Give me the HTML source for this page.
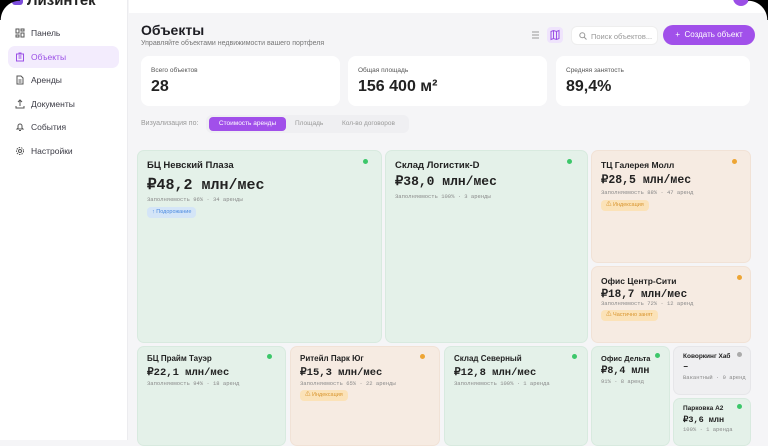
<!DOCTYPE html>
<html><head><meta charset="utf-8"><style>
*{box-sizing:border-box;margin:0;padding:0}
body{width:768px;height:440px;overflow:hidden;background:#f5f5f7;font-family:"Liberation Sans","Noto Sans CJK SC",sans-serif;position:relative;color:#1c1c22}
.side{position:absolute;left:0;top:0;width:128px;height:440px;background:#fff;border-right:1px solid #ececef}
.logo{position:absolute;left:27px;top:-8px;font-weight:bold;font-size:15px;color:#222}
.logoic{position:absolute;left:12px;top:-6px;width:11px;height:11px;border-radius:3px;background:#7c4ddb}
.nav{position:absolute;left:8px;width:111px;height:22px;border-radius:7px;font-size:8.5px;color:#3a3a44;padding-left:23px;line-height:22px}
.nav.act{background:#f3ecfd;color:#9b4fe6}
.nav svg{position:absolute;left:7px;top:6px}
.top{position:absolute;left:129px;top:0;right:0;height:13px;background:#fff}
.crn1{position:absolute;left:0;top:0;width:20px;height:20px;background:radial-gradient(circle at 20px 20px,transparent 19px,#000 19.5px)}
.crn2{position:absolute;right:0;top:0;width:20px;height:20px;background:radial-gradient(circle at 0 20px,transparent 19px,#000 19.5px)}
.avatar{position:absolute;left:733px;top:-10px;width:16px;height:16px;border-radius:50%;background:#9b4fe6}
h1{position:absolute;left:141px;top:22px;font-size:14px;font-weight:bold}
.sub{position:absolute;left:141px;top:40px;font-size:7px;color:#777}
.ib{position:absolute;top:27px;width:16px;height:16px;border-radius:4px}
.search{position:absolute;left:571px;top:26px;width:87px;height:19px;background:#fff;border-radius:6px;border:1px solid #eee;font-size:7.5px;color:#999;padding:5px 0 0 19px}
.btn{position:absolute;left:663px;top:25px;width:92px;height:20px;border-radius:10px;background:#a150ea;color:#fff;font-size:8px;text-align:center;line-height:20px}
.stat{position:absolute;top:56px;height:50px;background:#fff;border-radius:8px}
.stat .l{position:absolute;left:10px;top:11px;font-size:6.5px;color:#555}
.stat .v{position:absolute;left:10px;top:22px;font-size:16px;font-weight:bold;color:#222}
.vis{position:absolute;left:141px;top:120px;font-size:7px;color:#999}
.seg{position:absolute;left:206px;top:115px;width:203px;height:18px;background:#efeff2;border-radius:6px}
.seg span{position:absolute;top:0;line-height:18px;font-size:6.5px;color:#999}
.segact{position:absolute;left:209px;top:117px;width:77px;height:14px;border-radius:4px;background:#a150ea;color:#fff;font-size:6.5px;text-align:center;line-height:14px}
.c{position:absolute;border-radius:7px;border:1px solid #d8eadf;background:#e4f1e9;overflow:hidden}
.c.o{background:#f6ebe2;border-color:#f1e2d6}
.c.g{background:#efeff1;border-color:#e6e6e9}
.c .n{position:absolute;left:9px;top:9px;font-size:8.5px;font-weight:bold;color:#222;white-space:nowrap}
.c .p{position:absolute;left:9px;font-family:"Liberation Mono",monospace;font-weight:bold;color:#222;white-space:nowrap}
.c .m{position:absolute;left:9px;font-family:"Liberation Mono",monospace;font-size:5.5px;color:#888;white-space:nowrap}
.c .d{position:absolute;width:5px;height:5px;border-radius:50%;background:#3cc76a}
.c.o .d{background:#eda534}
.c.g .d{background:#aaa}
.tag{position:absolute;left:9px;height:11px;border-radius:4px;font-size:5.5px;line-height:11px;padding:0 5px;white-space:nowrap}
.tb{background:#d4e5f7;color:#4a8ae0}
.ty{background:#fbe2b8;color:#d8952e}
</style></head><body>
<div class="side">
<div class="logoic"></div><div class="logo">Лизинтек</div>
<div class="nav" style="top:22px"><svg width="10" height="10" viewBox="0 0 10 10" fill="none" stroke="#555" stroke-width="1"><rect x="1" y="1" width="3" height="4"/><rect x="6" y="1" width="3" height="2"/><rect x="6" y="5" width="3" height="4"/><rect x="1" y="7" width="3" height="2"/></svg>Панель</div>
<div class="nav act" style="top:46px"><svg width="10" height="10" viewBox="0 0 10 10" fill="none" stroke="#9b4fe6" stroke-width="1"><rect x="1.5" y="2" width="7" height="7"/><path d="M3.5 4h3M3.5 6h3M4 2V1h2v1"/></svg>Объекты</div>
<div class="nav" style="top:69px"><svg width="10" height="10" viewBox="0 0 10 10" fill="none" stroke="#555" stroke-width="1"><path d="M2 1h4l2 2v6H2z M3.5 5h3M3.5 7h3"/></svg>Аренды</div>
<div class="nav" style="top:93px"><svg width="10" height="10" viewBox="0 0 10 10" fill="none" stroke="#555" stroke-width="1"><path d="M5 7V1M3 3l2-2 2 2M1 7v2h8V7"/></svg>Документы</div>
<div class="nav" style="top:116px"><svg width="10" height="10" viewBox="0 0 10 10" fill="none" stroke="#555" stroke-width="1"><path d="M2 7h6L7 6V4a2 2 0 0 0-4 0v2zM4 8.5h2"/></svg>События</div>
<div class="nav" style="top:140px"><svg width="10" height="10" viewBox="0 0 10 10" fill="none" stroke="#555" stroke-width="1"><circle cx="5" cy="5" r="1.5"/><circle cx="5" cy="5" r="3.5" stroke-dasharray="1.5 1"/></svg>Настройки</div>
</div>
<div class="top"></div>
<div class="avatar"></div>
<div class="crn1"></div><div class="crn2"></div>
<h1>Объекты</h1>
<div class="sub">Управляйте объектами недвижимости вашего портфеля</div>
<div class="ib" style="left:527px"><svg width="16" height="16" viewBox="0 0 16 16" stroke="#999" stroke-width="1"><path d="M5 5h7M5 8h7M5 11h7"/></svg></div>
<div class="ib" style="left:547px;background:#efe4fc"><svg width="16" height="16" viewBox="0 0 16 16" fill="none" stroke="#9b4fe6" stroke-width="1"><path d="M4 4.5l2.5-1 3 1 2.5-1v8l-2.5 1-3-1-2.5 1z M6.5 3.5v8M9.5 4.5v8"/></svg></div>
<div class="search"><svg style="position:absolute;left:7px;top:5px" width="8" height="8" viewBox="0 0 8 8" fill="none" stroke="#999"><circle cx="3.3" cy="3.3" r="2.5"/><path d="M5 5l2.5 2.5"/></svg>Поиск объектов...</div>
<div class="btn">+&nbsp; Создать объект</div>
<div class="stat" style="left:141px;width:199px"><div class="l">Всего объектов</div><div class="v">28</div></div>
<div class="stat" style="left:348px;width:199px"><div class="l">Общая площадь</div><div class="v">156 400 м²</div></div>
<div class="stat" style="left:556px;width:194px"><div class="l">Средняя занятость</div><div class="v">89,4%</div></div>
<div class="vis">Визуализация по:</div>
<div class="seg"><span style="left:89px">Площадь</span><span style="left:136px">Кол-во договоров</span></div>
<div class="segact">Стоимость аренды</div>

<div class="c" style="left:137px;top:150px;width:245px;height:193px"><div class="n" style="font-size:9.5px">БЦ Невский Плаза</div><div class="d" style="left:225px;top:8px"></div><div class="p" style="top:24px;font-size:15px">₽48,2 млн/мес</div><div class="m" style="top:45px">Заполняемость 96% · 34 аренды</div><div class="tag tb" style="top:56px">↑ Подорожание</div></div>
<div class="c" style="left:385px;top:150px;width:203px;height:193px"><div class="n" style="font-size:9.5px">Склад Логистик-D</div><div class="d" style="left:181px;top:8px"></div><div class="p" style="top:23px;font-size:13px">₽38,0 млн/мес</div><div class="m" style="top:42px">Заполняемость 100% · 3 аренды</div></div>
<div class="c o" style="left:591px;top:150px;width:160px;height:113px"><div class="n">ТЦ Галерея Молл</div><div class="d" style="left:140px;top:8px"></div><div class="p" style="top:21px;font-size:11.5px">₽28,5 млн/мес</div><div class="m" style="top:38px">Заполняемость 88% · 47 аренд</div><div class="tag ty" style="top:49px">⚠ Индексация</div></div>
<div class="c o" style="left:591px;top:266px;width:160px;height:77px"><div class="n">Офис Центр-Сити</div><div class="d" style="left:145px;top:8px"></div><div class="p" style="top:20px;font-size:11px">₽18,7 млн/мес</div><div class="m" style="top:33px">Заполняемость 72% · 12 аренд</div><div class="tag ty" style="top:43px">⚠ Частично занят</div></div>
<div class="c" style="left:137px;top:346px;width:149px;height:100px"><div class="n" style="top:7px;font-size:8px">БЦ Прайм Тауэр</div><div class="d" style="left:129px;top:7px"></div><div class="p" style="top:19px;font-size:10.5px">₽22,1 млн/мес</div><div class="m" style="top:33px">Заполняемость 94% · 18 аренд</div></div>
<div class="c o" style="left:290px;top:346px;width:150px;height:100px"><div class="n" style="top:7px;font-size:8px">Ритейл Парк Юг</div><div class="d" style="left:129px;top:7px"></div><div class="p" style="top:19px;font-size:10.5px">₽15,3 млн/мес</div><div class="m" style="top:33px">Заполняемость 65% · 22 аренды</div><div class="tag ty" style="top:43px">⚠ Индексация</div></div>
<div class="c" style="left:444px;top:346px;width:144px;height:100px"><div class="n" style="top:7px;font-size:8px">Склад Северный</div><div class="d" style="left:127px;top:7px"></div><div class="p" style="top:19px;font-size:10.5px">₽12,8 млн/мес</div><div class="m" style="top:33px">Заполняемость 100% · 1 аренда</div></div>
<div class="c" style="left:591px;top:346px;width:79px;height:100px"><div class="n" style="top:7px;font-size:7.5px">Офис Дельта</div><div class="d" style="left:63px;top:6px"></div><div class="p" style="top:18px;font-size:10px">₽8,4 млн</div><div class="m" style="top:31px">91% · 8 аренд</div></div>
<div class="c g" style="left:673px;top:346px;width:78px;height:49px"><div class="n" style="top:6px;font-size:6.5px">Коворкинг Хаб</div><div class="d" style="left:63px;top:5px"></div><div class="p" style="top:15px;font-size:9px">–</div><div class="m" style="top:27px">Вакантный · 0 аренд</div></div>
<div class="c" style="left:673px;top:398px;width:78px;height:48px"><div class="n" style="top:6px;font-size:6.5px">Парковка А2</div><div class="d" style="left:63px;top:5px"></div><div class="p" style="top:16px;font-size:8.5px">₽3,6 млн</div><div class="m" style="top:27px">100% · 1 аренда</div></div>
</body></html>
